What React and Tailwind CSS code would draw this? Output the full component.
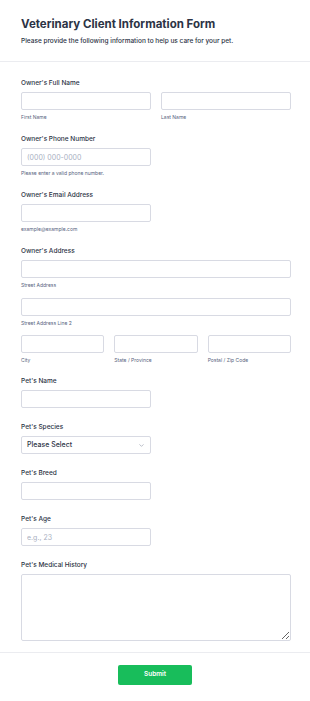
import { ChevronDown } from "lucide-react";

const inputCls =
  "block w-full h-[18px] rounded-[2px] border border-[#d8dae3] bg-white px-[5px] text-[7px] text-[#2c3345] placeholder:text-[#a9b0bf] outline-none";

function Label({ children }) {
  return (
    <div className="h-[10px] mb-[4px] text-[6.5px] leading-[10px] font-medium text-[#2c3345]">
      {children}
    </div>
  );
}

function Sub({ children, className = "" }) {
  return (
    <div className={"mt-[3px] h-[8px] text-[5px] leading-[8px] text-[#57647e] " + className}>
      {children}
    </div>
  );
}

export default function App() {
  return (
    <div className="w-[310px] min-h-[701px] bg-white font-['Inter',sans-serif]">
      <div className="border-b border-[#ebecf0] px-[21px] pt-[16px] pb-[15px]">
        <h1 className="text-[11.5px] leading-[16px] font-bold text-[#2c3345]">
          Veterinary Client Information Form
        </h1>
        <p className="mt-[4px] text-[6.5px] leading-[10px] font-medium text-[#2c3345]">
          Please provide the following information to help us care for your pet.
        </p>
      </div>

      <div className="flex flex-col pl-[21px] pr-[19px] pt-[16px]">
        <div>
          <Label>Owner's Full Name</Label>
          <div className="grid grid-cols-2 gap-x-[10px]">
            <div>
              <input className={inputCls} />
              <Sub>First Name</Sub>
            </div>
            <div>
              <input className={inputCls} />
              <Sub>Last Name</Sub>
            </div>
          </div>
        </div>

        <div className="mt-[13px] w-[130px]">
          <Label>Owner's Phone Number</Label>
          <input className={inputCls} placeholder="(000) 000-0000" />
          <Sub>Please enter a valid phone number.</Sub>
        </div>

        <div className="mt-[13px] w-[130px]">
          <Label>Owner's Email Address</Label>
          <input className={inputCls} />
          <Sub>example@example.com</Sub>
        </div>

        <div className="mt-[13px]">
          <Label>Owner's Address</Label>
          <input className={inputCls} />
          <Sub>Street Address</Sub>
          <input className={inputCls + " mt-[9px]"} />
          <Sub>Street Address Line 2</Sub>
          <div className="mt-[8px] grid grid-cols-3 gap-x-[10px]">
            <div>
              <input className={inputCls} />
              <Sub>City</Sub>
            </div>
            <div>
              <input className={inputCls} />
              <Sub>State / Province</Sub>
            </div>
            <div>
              <input className={inputCls} />
              <Sub>Postal / Zip Code</Sub>
            </div>
          </div>
        </div>

        <div className="mt-[12px] w-[130px]">
          <Label>Pet's Name</Label>
          <input className={inputCls} />
        </div>

        <div className="mt-[14px] w-[130px]">
          <Label>Pet's Species</Label>
          <div className="flex h-[18px] items-center justify-between rounded-[2px] border border-[#d8dae3] bg-white px-[5px]">
            <span className="text-[7px] font-medium text-[#2c3345]">Please Select</span>
            <ChevronDown className="w-[7px] h-[7px] text-[#8c93a3]" strokeWidth={2} />
          </div>
        </div>

        <div className="mt-[14px] w-[130px]">
          <Label>Pet's Breed</Label>
          <input className={inputCls} />
        </div>

        <div className="mt-[14px] w-[130px]">
          <Label>Pet's Age</Label>
          <input className={inputCls} placeholder="e.g., 23" />
        </div>

        <div className="mt-[14px]">
          <Label>Pet's Medical History</Label>
          <textarea className="block w-full h-[67px] rounded-[2px] border border-[#d8dae3] bg-white px-[5px] text-[7px] outline-none resize-y" />
        </div>
      </div>

      <div className="mt-[11px] border-t border-[#ebecf0] flex justify-center pt-[12px] pb-[17px]">
        <button className="w-[74px] h-[20px] rounded-[2px] bg-[#18bd5b] text-[6.5px] font-semibold text-white">
          Submit
        </button>
      </div>
    </div>
  );
}
